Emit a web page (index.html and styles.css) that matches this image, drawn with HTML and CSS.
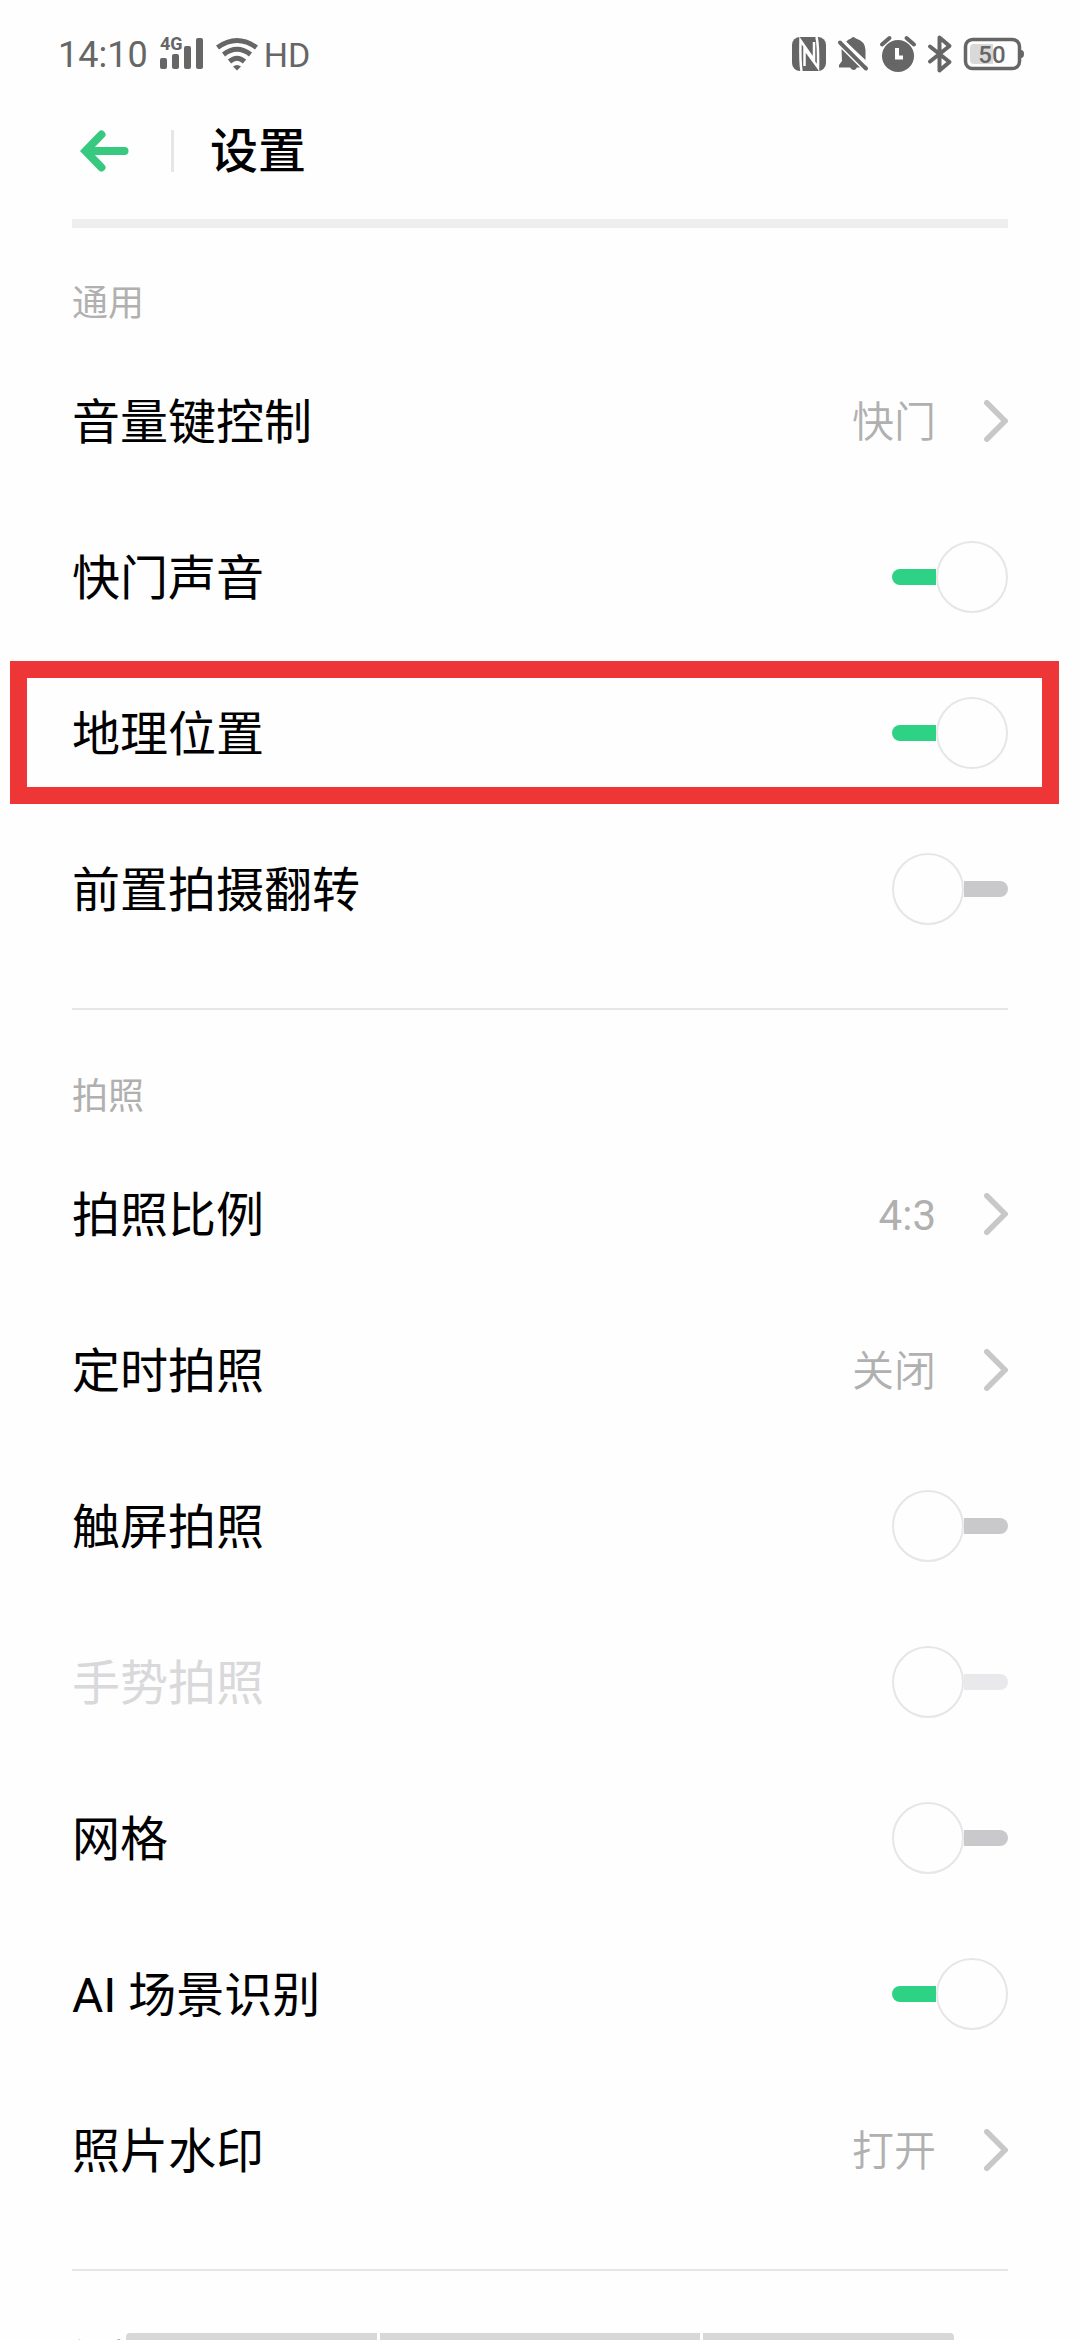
FILE: index.html
```
<!DOCTYPE html>
<html lang="zh-CN">
<head>
    <meta charset="utf-8" />
    <meta name="viewport" content="width=device-width, initial-scale=1" />
    <title>设置</title>
    <link rel="stylesheet" href="styles.css">
</head>
<body>

    <!-- shared chevron for rows that open a sub page -->
    <svg class="defs" aria-hidden="true">
        <symbol id="chevron" viewBox="0 0 24 42">
            <path d="M2.8 2.8 21 21 2.8 39.2" fill="none" stroke="currentColor" stroke-width="5.500" stroke-linecap="round" stroke-linejoin="miter"/>
        </symbol>
    </svg>

    <div class="status-bar">
        <div class="status-left">
            <span class="clock">14:10</span>
            <svg class="signal" width="44" height="32" viewBox="0 0 44 32" aria-hidden="true">
                <text x="0" y="12">4G</text>
                <rect x="0" y="20" width="7" height="11" rx="2"/>
                <rect x="12" y="16" width="7" height="15" rx="2"/>
                <rect x="24" y="8" width="7" height="23" rx="2"/>
                <rect x="36" y="0" width="7" height="31" rx="2"/>
            </svg>
            <svg class="wifi" width="42" height="32" viewBox="0 0 42 32" aria-hidden="true">
                <g fill="none" stroke="currentColor" stroke-width="5">
                    <path d="M1.500 9.500Q21-4.500 40.500 9.500"/>
                    <path d="M7.500 16.500Q21 6 34.500 16.500"/>
                    <path d="M13.500 23.500Q21 17 28.500 23.500"/>
                </g>
                <path d="M17 28.500Q21 25.500 25 28.500L21 32.500Z"/>
            </svg>
            <span class="hd">HD</span>
        </div>
        <div class="status-right">
            <svg width="34" height="34" viewBox="0 0 34 34" aria-hidden="true">
                <rect width="34" height="34" rx="8"/>
                <path d="M9.500 34Q8 26 8.500 3.500L22 23V5M24.500 0Q26.500 8 26 30.500L12.500 12V29" fill="none" stroke="#fefefe" stroke-width="2.500"/>
            </svg>
            <svg width="30" height="36" viewBox="0 0 30 36" aria-hidden="true">
                <path d="M8 6Q10 3 13 2.500Q15-.5 18 2.500Q27 5 27.500 14V24ZM3.500 13 22 31.500H19Q16 36.500 12 31.500H1V29L4 25Z"/>
                <path d="M2 6.500 28 32.500" fill="none" stroke="currentColor" stroke-width="4" stroke-linecap="round"/>
                <path d="M5 4.500 29 28.500" fill="none" stroke="#fefefe" stroke-width="3"/>
            </svg>
            <svg width="36" height="36" viewBox="0 0 36 36" aria-hidden="true">
                <circle cx="18" cy="20" r="16"/>
                <path d="M2 8.500 9.500 2M34 8.500 26.500 2" fill="none" stroke="currentColor" stroke-width="4" stroke-linecap="round"/>
                <path d="M17 12V21.500H23" fill="none" stroke="#fefefe" stroke-width="4"/>
            </svg>
            <svg width="24" height="38" viewBox="0 0 24 38" aria-hidden="true">
                <path d="M2 11.500 21.500 27 11.500 35.500V2.500L21.500 11 2 26.500" fill="none" stroke="currentColor" stroke-width="4" stroke-linecap="round" stroke-linejoin="round"/>
            </svg>
            <svg class="battery" width="60" height="34" viewBox="0 0 60 34" aria-hidden="true">
                <rect x="1.500" y="2.500" width="54" height="29" rx="7" fill="none" stroke="currentColor" stroke-width="3.500"/>
                <path d="M57 13Q60 13 60 17T57 21Z"/>
                <path d="M10 7H29V27H10Q6 27 6 23V11Q6 7 10 7Z" fill="#d9d9d9"/>
                <text x="28" y="26" text-anchor="middle">50</text>
            </svg>
        </div>
    </div>

    <header class="header">
        <button class="back" type="button" aria-label="返回">
            <svg width="48" height="42" viewBox="0 0 48 42">
                <path d="M6 21H43.500M20.500 4.500 4.500 21 20.500 37.500" fill="none" stroke="currentColor" stroke-width="8" stroke-linecap="round"/>
            </svg>
        </button>
        <span class="separator"></span>
        <h1>设置</h1>
    </header>

    <main class="settings">
        <section class="group">
            <h2>通用</h2>
            <button class="row" type="button">
                <span class="name">音量键控制</span>
                <span class="value">快门</span>
                <svg class="chevron"><use href="#chevron"/></svg>
            </button>
            <label class="row">
                <span class="name">快门声音</span>
                <input class="switch" type="checkbox" checked>
            </label>
            <label class="row row--marked">
                <span class="name">地理位置</span>
                <input class="switch" type="checkbox" checked>
            </label>
            <label class="row">
                <span class="name">前置拍摄翻转</span>
                <input class="switch" type="checkbox">
            </label>
        </section>

        <section class="group">
            <h2>拍照</h2>
            <button class="row" type="button">
                <span class="name">拍照比例</span>
                <span class="value value--ratio">4:3</span>
                <svg class="chevron"><use href="#chevron"/></svg>
            </button>
            <button class="row" type="button">
                <span class="name">定时拍照</span>
                <span class="value">关闭</span>
                <svg class="chevron"><use href="#chevron"/></svg>
            </button>
            <label class="row">
                <span class="name">触屏拍照</span>
                <input class="switch" type="checkbox">
            </label>
            <label class="row row--disabled">
                <span class="name">手势拍照</span>
                <input class="switch" type="checkbox" disabled>
            </label>
            <label class="row">
                <span class="name">网格</span>
                <input class="switch" type="checkbox">
            </label>
            <label class="row">
                <span class="name">AI 场景识别</span>
                <input class="switch" type="checkbox" checked>
            </label>
            <button class="row" type="button">
                <span class="name">照片水印</span>
                <span class="value">打开</span>
                <svg class="chevron"><use href="#chevron"/></svg>
            </button>
        </section>

        <section class="group">
            <h2>视频</h2>
        </section>
    </main>

    <!-- gesture hints along the bottom edge -->
    <div class="gesture-bar">
        <span></span>
        <span></span>
        <span></span>
    </div>
</body>
</html>
```
FILE: styles.css
```
:root{
    --bg:#fefefe;
    --text:#000;
    --muted:#b0b0b0;
    --status:#666;
    --line:#e6e6e6;
    --green:#2dd284;
    --track:#c9c8ca;
    --mark:#ef3636;
    --side:72px;
}
*,
*::before,
*::after{
    box-sizing:border-box;
}
body{
    display:flex;
    flex-direction:column;
    height:100vh;
    margin:0;
    overflow:hidden;
    background:var(--bg);
    color:var(--text);
    font-family:Roboto,"Noto Sans CJK SC",sans-serif;
}
h1,h2{
    margin:0;
}
button{
    padding:0;
    border:none;
    background:none;
    color:inherit;
    font:inherit;
    text-align:left;
}
svg{
    display:block;
    flex:none;
    overflow:visible;
    fill:currentColor;
}
.defs{
    position:absolute;
    width:0;
    height:0;
}

/* status bar */
.status-bar{
    display:flex;
    flex:none;
    align-items:center;
    justify-content:space-between;
    height:108px;
    padding:0 56px 0 58px;
    color:var(--status);
}
.status-left,
.status-right{
    display:flex;
    align-items:center;
    gap:12px;
}
.clock{
    padding-top:2px;
    font-size:36px;
    line-height:40px;
}
.hd{
    margin-left:-6px;
    padding-top:2px;
    font-size:34px;
    line-height:40px;
}
.signal text{
    font-size:18px;
    font-weight:700;
}
.battery text{
    font-size:24px;
    font-weight:500;
}

/* title */
.header{
    display:flex;
    flex:none;
    align-items:center;
    height:120px;
    margin:0 var(--side);
    padding:0 9px 25px;
    border-bottom:9px solid #eee;
}
.back{
    color:#38c981;
}
.separator{
    width:3px;
    height:42px;
    margin:0 36px 0 42px;
    background:var(--line);
}
h1{
    padding-top:2px;
    font-size:48px;
    font-weight:500;
    line-height:72px;
}

/* list */
.settings{
    flex:1;
    min-height:0;
    padding:0 var(--side);
    overflow:hidden;
}
.group{
    padding:49px 0 41px;
}
.group + .group{
    padding-top:60px;
    border-top:2px solid var(--line);
}
h2{
    margin-bottom:12px;
    color:var(--muted);
    font-size:36px;
    font-weight:400;
    line-height:54px;
}
.row{
    display:flex;
    position:relative;
    align-items:center;
    width:100%;
    height:156px;
}
.name{
    flex:1;
    padding-top:4px;
    font-size:48px;
    font-weight:400;
    line-height:72px;
}
.value{
    margin-right:48px;
    padding-top:4px;
    color:var(--muted);
    font-size:42px;
    font-weight:350;
    line-height:64px;
}
.value--ratio{
    font-weight:400;
}
.chevron{
    width:24px;
    height:42px;
    color:#c8c8c8;
}
.row--disabled .name{
    color:#d9d8da;
}

/* red frame reaches out past the list padding */
.row--marked::after{
    content:"";
    position:absolute;
    inset:6px -51px 7px -62px;
    border:17px solid var(--mark);
    pointer-events:none;
}

/* switch */
.switch{
    appearance:none;
    display:flex;
    align-items:center;
    width:116px;
    height:72px;
    margin:0;
}
.switch::before{
    content:"";
    flex:none;
    width:72px;
    height:72px;
    border:2px solid var(--line);
    border-radius:50%;
}
.switch::after{
    content:"";
    flex:1;
    height:16px;
    border-radius:0 8px 8px 0;
    background:var(--track);
}
.switch:checked{
    --track:var(--green);
    flex-direction:row-reverse;
}
.switch:checked::after{
    border-radius:8px 0 0 8px;
}
.switch:disabled{
    --track:#e9e8ea;
}

/* bottom edge */
.gesture-bar{
    display:grid;
    position:fixed;
    right:126px;
    bottom:0;
    left:126px;
    grid-template-columns:251fr 320fr 251fr;
    gap:3px;
    height:7px;
    background:var(--bg);
}
.gesture-bar span{
    background:#d8d7d9;
}
.gesture-bar span:first-child{
    border-top-left-radius:4px;
}
.gesture-bar span:last-child{
    border-top-right-radius:4px;
}
```
